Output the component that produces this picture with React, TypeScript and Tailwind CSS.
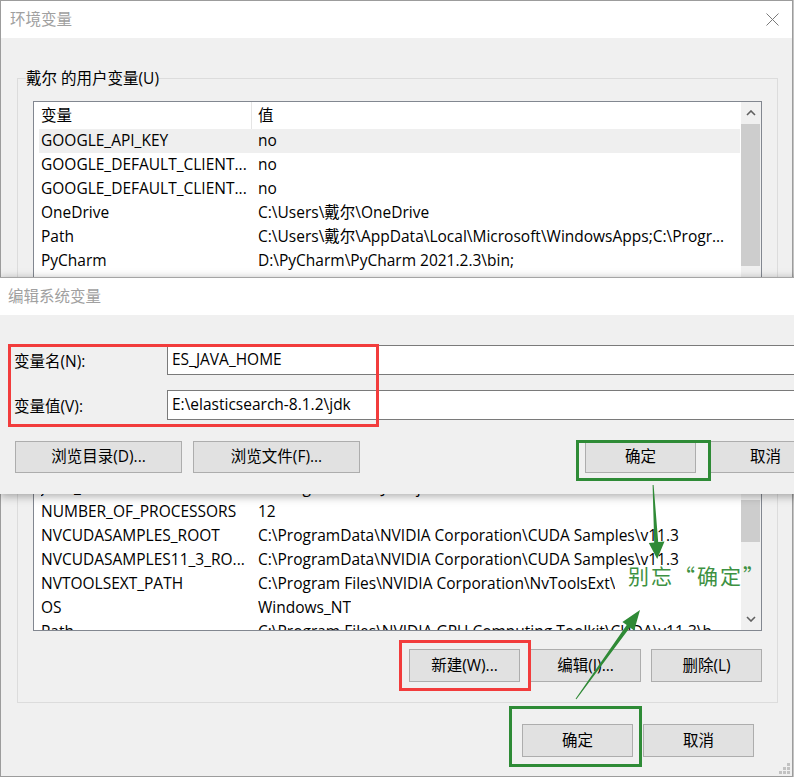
import type { ReactNode } from "react";

const UI = "font-['Open_Sans','Noto_Sans_CJK_SC',sans-serif] text-[15.5px] text-black";

type Row = { name: string; value: string; selected?: boolean };

const userVars: Row[] = [
  { name: "GOOGLE_API_KEY", value: "no", selected: true },
  { name: "GOOGLE_DEFAULT_CLIENT...", value: "no" },
  { name: "GOOGLE_DEFAULT_CLIENT...", value: "no" },
  { name: "OneDrive", value: "C:\\Users\\戴尔\\OneDrive" },
  { name: "Path", value: "C:\\Users\\戴尔\\AppData\\Local\\Microsoft\\WindowsApps;C:\\Progr..." },
  { name: "PyCharm", value: "D:\\PyCharm\\PyCharm 2021.2.3\\bin;" },
];

// first rows of the system list sit behind the edit dialog
const systemVars: Row[] = [
  { name: "", value: "" },
  { name: "", value: "" },
  { name: "", value: "" },
  { name: "JAVA_HOME", value: "C:\\Program Files\\Java\\jdk-17" },
  { name: "NUMBER_OF_PROCESSORS", value: "12" },
  { name: "NVCUDASAMPLES_ROOT", value: "C:\\ProgramData\\NVIDIA Corporation\\CUDA Samples\\v11.3" },
  { name: "NVCUDASAMPLES11_3_RO...", value: "C:\\ProgramData\\NVIDIA Corporation\\CUDA Samples\\v11.3" },
  { name: "NVTOOLSEXT_PATH", value: "C:\\Program Files\\NVIDIA Corporation\\NvToolsExt\\" },
  { name: "OS", value: "Windows_NT" },
  { name: "Path", value: "C:\\Program Files\\NVIDIA GPU Computing Toolkit\\CUDA\\v11.3\\b..." },
];

function Chevron({ down }: { down?: boolean }) {
  return (
    <svg width="10" height="6" viewBox="0 0 10 6" className={down ? "rotate-180" : ""}>
      <path d="M1 5 L5 1 L9 5" fill="none" stroke="#606060" strokeWidth="1.6" />
    </svg>
  );
}

function Btn({ children, className }: { children: ReactNode; className: string }) {
  return (
    <div
      className={`flex items-center justify-center border border-[#adadad] bg-[#e1e1e1] ${className}`}
    >
      {children}
    </div>
  );
}

function VarList({
  rows,
  className,
  gap,
  thumb,
}: {
  rows: Row[];
  className: string;
  gap: string;
  thumb: string;
}) {
  return (
    <div className={`flex shrink-0 border border-[#828790] bg-white ${className}`}>
      <div className="flex min-w-0 flex-1 flex-col overflow-hidden">
        <div className="flex h-[27px] shrink-0 items-center pl-[7px]">
          <span className="w-[210px]">变量</span>
          <span className="h-full w-px bg-[#e5e5e5]" />
          <span className="pl-[6px]">值</span>
        </div>
        {rows.map((r, i) => (
          <div
            key={i}
            className={`ml-[5px] mr-px flex h-[24px] shrink-0 items-center whitespace-nowrap pl-[2px] ${
              r.selected ? "bg-[#efefef]" : ""
            }`}
          >
            <span className="w-[217px] shrink-0 overflow-hidden">{r.name}</span>
            <span className="overflow-hidden">{r.value}</span>
          </div>
        ))}
      </div>
      <div className="flex w-[20px] shrink-0 flex-col bg-[#f0f0f0]">
        <div className="flex h-[22px] shrink-0 items-center justify-center">
          <Chevron />
        </div>
        <div className={`shrink-0 ${gap}`} />
        <div className={`mr-px shrink-0 bg-[#cdcdcd] ${thumb}`} />
        <div className="flex-1" />
        <div className="flex h-[22px] shrink-0 items-center justify-center">
          <Chevron down />
        </div>
      </div>
    </div>
  );
}

function GroupBox({
  label,
  className,
  children,
}: {
  label: string;
  className: string;
  children: ReactNode;
}) {
  return (
    <div className={`relative flex flex-col border border-[#dcdcdc] px-[15px] pt-[22px] ${className}`}>
      <span className="absolute left-[8px] top-[-11px] bg-[#f0f0f0] leading-[20px]">{label}</span>
      {children}
    </div>
  );
}

function CloseIcon() {
  return (
    <svg width="13" height="13" viewBox="0 0 13 13">
      <path d="M0.5 0.5 L12.5 12.5 M12.5 0.5 L0.5 12.5" stroke="#7a7a7a" strokeWidth="1" />
    </svg>
  );
}

function Grip() {
  const dots = [
    [10, 0],
    [6, 4],
    [10, 4],
    [2, 8],
    [6, 8],
    [10, 8],
  ];
  return (
    <svg width="13" height="11" viewBox="0 0 13 11">
      {dots.map(([x, y], i) => (
        <rect key={i} x={x} y={y} width="3" height="3" fill="#c2c2c2" />
      ))}
    </svg>
  );
}

function EditDialog() {
  return (
    <div className="absolute left-0 top-[277px] flex h-[217px] w-[837px] flex-col border-t border-[#a5a5a5] bg-[#f0f0f0] shadow-[0_2px_9px_rgba(0,0,0,0.35)]">
      <div className="flex h-[37px] shrink-0 items-center bg-white pl-[8px] text-[#a0a0a0]">编辑系统变量</div>
      <div className="flex flex-col pl-[14px] pt-[30px]">
        <div className="flex items-center">
          <span className="w-[153px] pt-[3px]">变量名(N):</span>
          <div className="mr-[15px] flex h-[30px] flex-1 items-center border border-[#7a7a7a] bg-white pl-[4px]">
            ES_JAVA_HOME
          </div>
        </div>
        <div className="mt-[15px] flex items-center">
          <span className="w-[153px] pt-[3px]">变量值(V):</span>
          <div className="mr-[15px] flex h-[30px] flex-1 items-center border border-[#7a7a7a] bg-white pl-[4px]">
            E:\elasticsearch-8.1.2\jdk
          </div>
        </div>
        <div className="mt-[21px] flex">
          <div className="ml-px flex gap-[11px]">
            <Btn className="h-[32px] w-[167px]">浏览目录(D)...</Btn>
            <Btn className="h-[32px] w-[167px]">浏览文件(F)...</Btn>
          </div>
          <div className="ml-auto mr-[16px] flex gap-[14px]">
            <Btn className="h-[32px] w-[111px]">确定</Btn>
            <Btn className="h-[32px] w-[111px]">取消</Btn>
          </div>
        </div>
      </div>
      <div className="absolute left-[8px] top-[66px] h-[83px] w-[371px] border-[3px] border-[#f23c3c]" />
      <div className="absolute left-[576px] top-[162px] h-[41px] w-[135px] border-[3px] border-[#2e8b36]" />
    </div>
  );
}

function Arrows() {
  return (
    <svg className="pointer-events-none absolute left-0 top-0" width="794" height="777" viewBox="0 0 794 777">
      <polygon
        points="652.6,485 653.6,485 658.2,542 664.5,541.5 657.2,559 648.8,543 654.2,542.4"
        fill="#2f8a36"
      />
      <polygon
        points="575.6,698.7 576.4,699.3 629.9,627.4 634.2,630.5 640,610 622.4,621.9 626.7,625"
        fill="#2f8a36"
      />
    </svg>
  );
}

export default function App() {
  return (
    <div className={`relative h-[777px] w-[794px] overflow-hidden bg-[#c4c4c4] ${UI}`}>
      <div className="relative flex h-[777px] w-[793px] flex-col border border-[#9c9c9c] bg-[#f0f0f0]">
        <div className="flex h-[37px] shrink-0 items-center justify-between bg-white pl-[9px] pr-[13px]">
          <span className="text-[#a0a0a0]">环境变量</span>
          <CloseIcon />
        </div>
        <div className="flex flex-col pl-[16px] pt-[40px]">
          <GroupBox label="戴尔 的用户变量(U)" className="h-[257px] w-[761px]">
            <VarList rows={userVars} className="h-[220px]" gap="h-0" thumb="h-[142px]" />
          </GroupBox>
          <GroupBox label="系统变量(S)" className="mt-[18px] h-[350px] w-[761px]">
            <VarList rows={systemVars} className="h-[255px]" gap="h-[101px]" thumb="h-[42px]" />
            <div className="mt-[18px] flex justify-end gap-[10px]">
              <Btn className="h-[33px] w-[111px]">新建(W)...</Btn>
              <Btn className="h-[33px] w-[111px]">编辑(I)...</Btn>
              <Btn className="h-[33px] w-[111px]">删除(L)</Btn>
            </div>
          </GroupBox>
          <div className="mt-[21px] flex justify-end gap-[10px] pr-[38px]">
            <Btn className="h-[33px] w-[111px]">确定</Btn>
            <Btn className="h-[33px] w-[111px]">取消</Btn>
          </div>
        </div>
        <div className="absolute bottom-[2px] right-[2px]">
          <Grip />
        </div>
      </div>
      <EditDialog />
      <div className="absolute left-[399px] top-[640px] h-[51px] w-[132px] border-[3px] border-[#f23c3c]" />
      <div className="absolute left-[509px] top-[706px] h-[61px] w-[133px] border-[3px] border-[#2e8b36]" />
      <Arrows />
      <div className="absolute left-[628px] top-[561px] font-['Noto_Sans_CJK_SC',sans-serif] text-[21px] leading-[28px] tracking-[2px] text-[#3d9142]">
        别忘“确定”
      </div>
    </div>
  );
}
